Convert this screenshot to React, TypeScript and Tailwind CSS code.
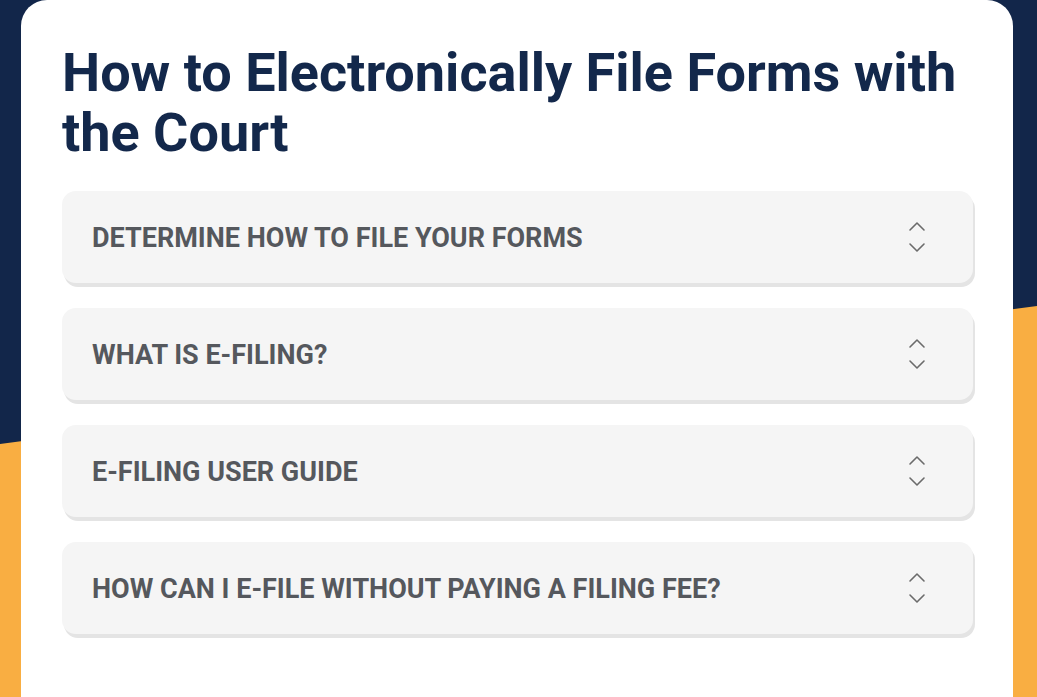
const items = [
  'Determine how to file your forms',
  'What is e-filing?',
  'E-filing user guide',
  'How can I e-file without paying a filing fee?',
]

function Chevrons() {
  return (
    <svg width="18" height="32" viewBox="0 0 18 32" fill="none" stroke="#6b6b6b" strokeWidth="1.6" strokeLinecap="round" strokeLinejoin="round">
      <path d="M2 9 L9 2 L16 9" />
      <path d="M2 23 L9 30 L16 23" />
    </svg>
  )
}

export default function App() {
  return (
    <div className="relative h-[697px] w-[1037px] overflow-hidden bg-[#12264a]" style={{ fontFamily: 'Roboto, "Liberation Sans", sans-serif' }}>
      <svg className="absolute inset-0" width="1037" height="697" viewBox="0 0 1037 697">
        <polygon points="0,444 1037,306 1037,697 0,697" fill="#f9ae42" />
      </svg>
      <div className="relative ml-[21px] h-[720px] w-[992px] rounded-t-[26px] bg-white pl-[41px] pr-[40px] pt-[43px]">
        <h1 className="text-[54px] font-bold leading-[60px] text-[#13284b]">
          How to Electronically File Forms with the Court
        </h1>
        <div className="mt-[28px] flex flex-col gap-[25px]">
          {items.map((t) => (
            <div key={t} className="flex h-[92px] items-center justify-between rounded-[14px] bg-[#f5f5f5] pl-[30px] pr-[47px] shadow-[2px_4px_0_#e4e4e4]">
              <span className="pt-[2px] text-[27px] font-bold uppercase text-[#55585d]">{t}</span>
              <Chevrons />
            </div>
          ))}
        </div>
      </div>
    </div>
  )
}
